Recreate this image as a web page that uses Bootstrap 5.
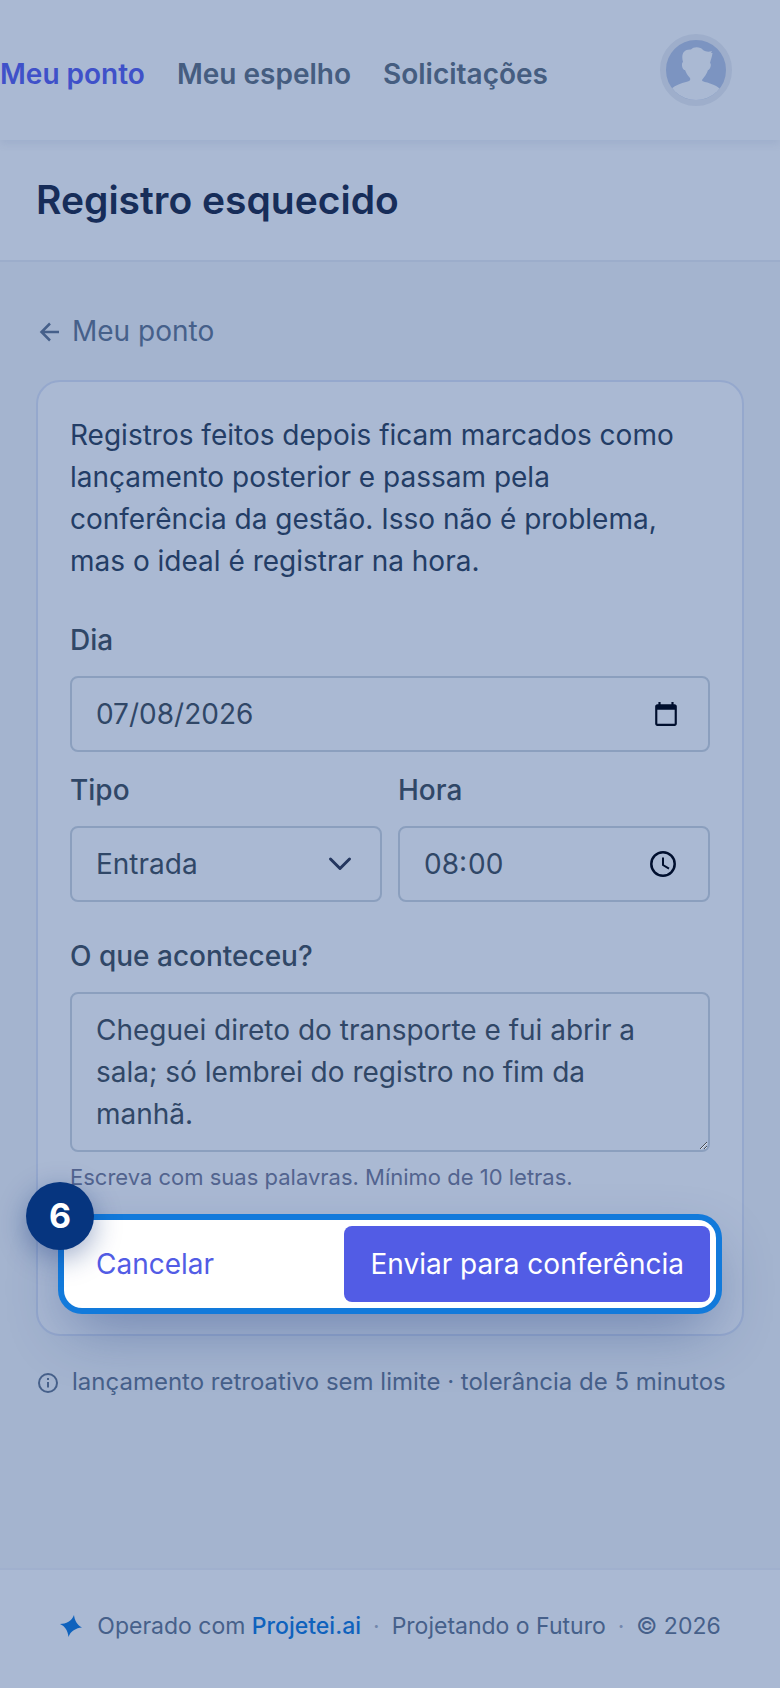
<!DOCTYPE html>
<html lang="pt-BR">
<head>
<meta charset="utf-8">
<meta name="viewport" content="width=device-width, initial-scale=1">
<title>Registro esquecido</title>
<link href="https://cdn.jsdelivr.net/npm/bootstrap@5.3.0/dist/css/bootstrap.min.css" rel="stylesheet">
<style>
  :root { --surface: #aab9d3; --ground: #a4b4cf; --line: #9cadcb; --ink: #304767; --muted: #46608a; --primary: #525ce5; }
  body { font-family: Inter, sans-serif; font-size: 28px; line-height: 42px; color: #233d66; background: var(--ground); }
  a { text-decoration: none; }
  .app-top { background: var(--surface); height: 140px; padding-right: 48px; box-shadow: 0 4px 8px rgba(60, 90, 150, .1); z-index: 1; }
  .app-nav { gap: 32px; padding-top: 8px; }
  .app-nav a { color: #455d80; font-weight: 600; }
  .app-nav a.active { color: #3f51c9; }
  .avatar { width: 72px; height: 72px; border: 6px solid #9eaecb; background: #7c94c1; }
  .page-head { background: var(--surface); border-bottom: 2px solid var(--line); padding: 36px; }
  .page-head h1 { font-size: 39px; line-height: 48px; font-weight: 600; color: #172d59; }
  main { padding: 48px 36px; }
  .back { color: var(--muted); gap: 8px; margin-bottom: 28px; }
  .panel { background: var(--surface); border: 2px solid #95a8cd; border-radius: 24px; padding: 32px; }
  .intro { margin-bottom: 36px; }
  .form-label { color: var(--ink); font-weight: 500; line-height: 44px; margin-bottom: 14px; }
  .form-control, .form-select { font-size: 28px; line-height: 42px; color: var(--ink); background-color: transparent; border: 2px solid #8b9fbe; border-radius: 8px; padding: 15px 24px; }
  input.form-control { height: 76px; }
  .form-select { background-image: url("data:image/svg+xml,%3Csvg xmlns='http://www.w3.org/2000/svg' viewBox='0 0 24 24'%3E%3Cpath d='M2.500 7 12 16.500 21.500 7' fill='none' stroke='%2324365f' stroke-width='3' stroke-linecap='round' stroke-linejoin='round'/%3E%3C/svg%3E"); background-size: 24px; background-position: right 28px center; }
  .form-control::-webkit-datetime-edit { padding: 0; }
  .form-control::-webkit-datetime-edit-ampm-field { display: none; }
  .form-control::-webkit-calendar-picker-indicator { padding: 0; margin: 0; height: 32px; background-repeat: no-repeat; background-position: center; }
  #dia::-webkit-calendar-picker-indicator { width: 36px; background-size: 26px; background-image: url("data:image/svg+xml,%3Csvg xmlns='http://www.w3.org/2000/svg' viewBox='0 0 24 24'%3E%3Cpath fill='%23000f2e' d='M20 3h-1V1h-2v2H7V1H5v2H4c-1.100 0-2 .9-2 2v16c0 1.100.9 2 2 2h16c1.100 0 2-.9 2-2V5c0-1.100-.9-2-2-2zm0 18H4V8h16v13z'/%3E%3C/svg%3E"); }
  #hora::-webkit-calendar-picker-indicator { width: 42px; background-size: 26px; background-image: url("data:image/svg+xml,%3Csvg xmlns='http://www.w3.org/2000/svg' viewBox='0 0 26 26'%3E%3Cg fill='none' stroke='%23000f2e'%3E%3Ccircle cx='13' cy='13' r='11.700' stroke-width='2.500'/%3E%3Cpath d='M13 6.500V14l6 3.600' stroke-width='2'/%3E%3C/g%3E%3C/svg%3E"); }
  .field-gap { margin-bottom: 16px; }
  .pair { --bs-gutter-x: 16px; margin-bottom: 32px; }
  textarea.form-control { height: 160px; overflow: hidden; }
  .hint { color: #52648f; font-size: 22px; line-height: 34px; margin: 8px 0 32px; }
  .actions { background: #fff; border-radius: 12px; box-shadow: 0 0 0 6px #fff, 0 0 0 12px #127adb, 0 24px 60px rgba(25, 55, 125, .42); }
  .actions .btn { font-size: 28px; line-height: 42px; border: 2px solid transparent; border-radius: 8px; padding: 15px 24px; }
  .btn-quiet { color: var(--primary); }
  .btn-send, .btn-send:hover { background: var(--primary); color: #fff; }
  .step { left: -44px; top: -44px; width: 68px; height: 68px; background: #06357f; color: #fff; font-size: 34px; font-weight: 700; box-shadow: 0 8px 28px rgba(10, 45, 120, .4); }
  .note { font-size: 24px; line-height: 36px; color: var(--muted); gap: 12px; margin-top: 28px; }
  footer { height: 120px; background: var(--surface); border-top: 2px solid #a0b0ce; color: var(--muted); font-size: 23px; line-height: 34px; padding-bottom: 6px; }
  footer svg { margin-right: 14px; }
  footer a { color: #0f62bd; font-weight: 500; }
  .sep { color: #7488ad; margin: 0 12px; }
</style>
</head>
<body class="d-flex flex-column min-vh-100">
  <header class="app-top d-flex align-items-center justify-content-between position-relative">
    <nav class="app-nav d-flex" aria-label="Principal">
      <a class="active" href="#" aria-current="page">Meu ponto</a>
      <a href="#">Meu espelho</a>
      <a href="#">Solicitações</a>
    </nav>
    <a href="#" class="avatar rounded-circle overflow-hidden d-block" aria-label="Perfil">
      <svg class="d-block" viewBox="0 0 60 60" width="60" height="60" aria-hidden="true"><path fill="#aab9d3" d="M17 22C15 15 17 9 25 9.500C28 6 35 7 37 10C40 12 43 12 46 11L45 13L46.500 13C46 17 45 19 44 23C46 24 44 30 42 30C41 34 38 37 36 40C36 42 41 42 44 43.500C49 45 52 47 54 49L45 63H15L5 49C10 45 15 43 20 42C23 41 25 41 24 38C21 35 20 32 19 30C16 30 15 23 17 22Z"/></svg>
    </a>
  </header>
  <div class="page-head"><h1 class="m-0">Registro esquecido</h1></div>

  <main class="flex-grow-1">
    <a href="#" class="back d-flex align-items-center">
      <svg width="28" height="28" viewBox="0 0 28 28" fill="none" stroke="currentColor" stroke-width="2.500" aria-hidden="true"><path d="M23 15H6M14 6.500 5.500 15l8.500 8.500"/></svg>
      <span>Meu ponto</span>
    </a>
    <form class="panel">
      <p class="intro">Registros feitos depois ficam marcados como lançamento posterior e passam pela conferência da gestão. Isso não é problema, mas o ideal é registrar na hora.</p>
      <div class="field-gap">
        <label class="form-label d-block" for="dia">Dia</label>
        <input class="form-control" type="date" id="dia" value="2026-07-08">
      </div>
      <div class="row pair">
        <div class="col-6">
          <label class="form-label d-block" for="tipo">Tipo</label>
          <select class="form-select" id="tipo"><option>Entrada</option><option>Saída</option></select>
        </div>
        <div class="col-6">
          <label class="form-label d-block" for="hora">Hora</label>
          <input class="form-control" type="time" id="hora" value="08:00">
        </div>
      </div>
      <label class="form-label d-block" for="motivo">O que aconteceu?</label>
      <textarea class="form-control" id="motivo" rows="3" aria-describedby="dica">Cheguei direto do transporte e fui abrir a sala; só lembrei do registro no fim da manhã.</textarea>
      <p class="hint" id="dica">Escreva com suas palavras. Mínimo de 10 letras.</p>
      <div class="actions d-flex justify-content-between position-relative">
        <button type="button" class="btn btn-quiet">Cancelar</button>
        <button type="submit" class="btn btn-send">Enviar para conferência</button>
        <span class="step position-absolute rounded-circle d-flex align-items-center justify-content-center">6</span>
      </div>
    </form>
    <p class="note d-flex align-items-center mb-0">
      <svg width="24" height="24" viewBox="0 0 24 24" fill="none" stroke="currentColor" stroke-width="2" aria-hidden="true"><circle cx="12" cy="13" r="9"/><path d="M12 12v5.500M12 8v2"/></svg>
      <span>lançamento retroativo sem limite · tolerância de 5 minutos</span>
    </p>
  </main>

  <footer class="d-flex align-items-center justify-content-center">
    <svg width="24" height="24" viewBox="0 0 24 24" fill="#0f62bd" aria-hidden="true"><path d="M15 1C15.500 6 18 11 23 13.500C17 14 11.500 17 9.500 23C9 17 6 12 1 10C7 10 13 7 15 1Z"/></svg>
    <span>Operado com <a href="#">Projetei.ai</a></span>
    <span class="sep">·</span><span>Projetando o Futuro</span>
    <span class="sep">·</span><span>© 2026</span>
  </footer>
<script src="https://cdn.jsdelivr.net/npm/bootstrap@5.3.0/dist/js/bootstrap.bundle.min.js"></script>
</body>
</html>
